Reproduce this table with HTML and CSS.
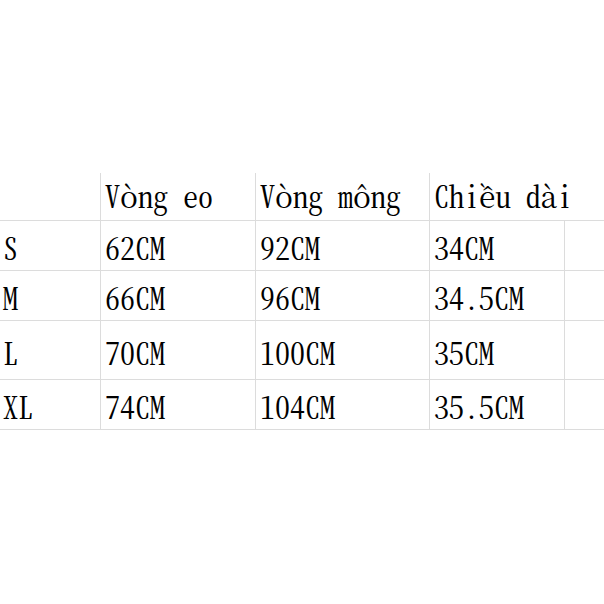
FILE: index.html
```html
<!DOCTYPE html>
<html lang="vi">
<head>
<meta charset="utf-8">
<title>Bảng size</title>
<link rel="stylesheet" href="styles.css">
</head>
<body>
<div class="sheet">
  <div class="row head">
    <div class="cell first"></div>
    <div class="cell">Vòng eo</div>
    <div class="cell">Vòng mông</div>
    <div class="cell">Chiều dài</div>
    <div class="cell last-head"></div>
  </div>
  <div class="row r-s">
    <div class="cell first">S</div>
    <div class="cell">62CM</div>
    <div class="cell">92CM</div>
    <div class="cell">34CM</div>
    <div class="cell"></div>
  </div>
  <div class="row r-m">
    <div class="cell first">M</div>
    <div class="cell">66CM</div>
    <div class="cell">96CM</div>
    <div class="cell">34.5CM</div>
    <div class="cell"></div>
  </div>
  <div class="row r-l">
    <div class="cell first">L</div>
    <div class="cell">70CM</div>
    <div class="cell">100CM</div>
    <div class="cell">35CM</div>
    <div class="cell"></div>
  </div>
  <div class="row r-xl">
    <div class="cell first">XL</div>
    <div class="cell">74CM</div>
    <div class="cell">104CM</div>
    <div class="cell">35.5CM</div>
    <div class="cell"></div>
  </div>
</div>
</body>
</html>
```
FILE: styles.css
```css
html, body {
  margin: 0;
  padding: 0;
  background: #fff;
  overflow: hidden;
}
.sheet {
  margin-top: 173px;
  width: 604px;
  font-family: "Noto Serif CJK SC", "Noto Serif CJK JP", "Liberation Serif", serif;
  font-feature-settings: "hwid" 1;
  font-size: 30px;
  line-height: 30px;
  color: #000;
}
.row {
  display: grid;
  grid-template-columns: 100px 155px 174px 135px 1fr;
}
.cell {
  box-sizing: border-box;
  border-left: 1px solid #dcdcdc;
  border-bottom: 1px solid #dcdcdc;
  padding: 3px 0 0 4px;
  display: flex;
  align-items: center;
  white-space: nowrap;
  min-width: 0;
}
.cell.first {
  border-left: none;
  padding-left: 3px;
}
.cell.last-head {
  border-left: none;
}
.head { height: 48px; }
.head .cell { padding-top: 0; padding-bottom: 4px; }
.r-s { height: 50px; }
.r-m { height: 50px; }
.r-l { height: 59px; }
.r-xl { height: 50px; }
```
